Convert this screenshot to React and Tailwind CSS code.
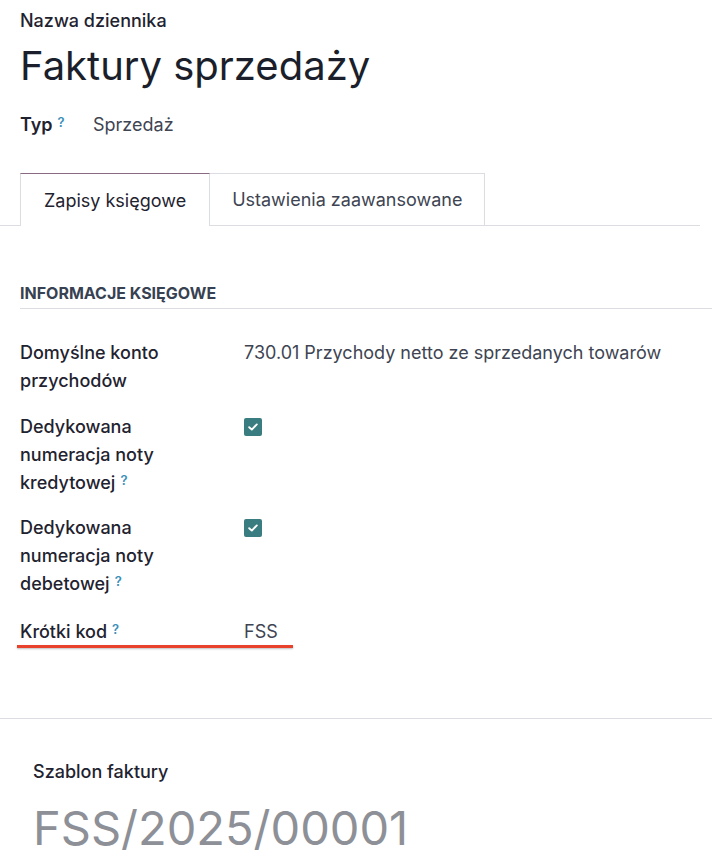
import React from 'react';

function Help() {
    return <sup className="ml-[5px] text-[13px] font-semibold text-[#3b8fb8] relative -top-[4px]">?</sup>;
}

function CheckBox() {
    return (
        <span className="mt-[5px] flex h-[18px] w-[18px] items-center justify-center rounded-[2px] bg-[#3a7d80]">
            <svg width="10" height="8" viewBox="0 0 10 8" fill="none">
                <path d="M1.2 4.2 L3.8 6.6 L8.8 1.4" stroke="white" strokeWidth="1.9" strokeLinecap="round" strokeLinejoin="round" />
            </svg>
        </span>
    );
}

function Row({ label, children, className = '' }) {
    return (
        <div className={`flex ${className}`}>
            <div className="w-[224px] shrink-0 text-[18px] leading-[28px] font-medium text-[#1f2330]">{label}</div>
            <div className="text-[18px] leading-[28px] text-[#3e4452]">{children}</div>
        </div>
    );
}

export default function App() {
    return (
        <div className="min-h-[868px] w-full bg-white font-['Inter',sans-serif]">
            <div className="px-5 pt-[9px]">
                <div className="text-[18px] leading-[24px] font-medium text-[#1f2330]">Nazwa dziennika</div>
                <h1 className="mt-[8px] text-[40px] leading-[50px] text-[#1b1f2b]">Faktury sprzedaży</h1>
                <div className="mt-[20px] flex items-center text-[18px] leading-[28px]">
                    <span className="w-[73px] font-semibold text-[#1f2330]">Typ<Help /></span>
                    <span className="text-[#3e4452]">Sprzedaż</span>
                </div>
            </div>

            <div className="mt-[34px] flex w-[700px] border-b border-[#dcdde2] pl-5">
                <div className="-mb-px flex h-[53px] items-center border-x border-t border-[#dcdde2] border-t-[#8a6a82] bg-white px-[23px] text-[18px] text-[#1f2330]">
                    Zapisy księgowe
                </div>
                <div className="flex h-[52px] items-center border-r border-t border-[#dcdde2] px-[22px] text-[18px] text-[#3e4452]">
                    Ustawienia zaawansowane
                </div>
            </div>

            <div className="pl-5 pt-[55px]">
                <div className="border-b border-[#dcdde2] pb-[3px] text-[16px] leading-[24px] font-bold uppercase text-[#374151]">
                    Informacje księgowe
                </div>
            </div>

            <div className="px-5 pt-[30px]">
                <Row label="Domyślne konto przychodów">730.01 Przychody netto ze sprzedanych towarów</Row>
                <Row className="mt-[18px]" label={<>Dedykowana<br />numeracja noty<br />kredytowej<Help /></>}>
                    <CheckBox />
                </Row>
                <Row className="mt-[17px]" label={<>Dedykowana<br />numeracja noty<br />debetowej<Help /></>}>
                    <CheckBox />
                </Row>
                <div className="relative mt-[20px]">
                    <Row label={<>Krótki kod<Help /></>}>FSS</Row>
                    <div className="absolute left-[-3px] top-[27px] h-[3px] w-[276px] bg-[#e8422d] shadow-[0_1px_2px_rgba(0,0,0,0.25)]" />
                </div>
            </div>

            <div className="mt-[72px] border-t border-[#dcdde2] px-[33px] pt-[39px]">
                <div className="text-[18px] leading-[28px] font-medium text-[#1f2330]">Szablon faktury</div>
                <div className="mt-[12px] text-[47px] leading-[60px] text-[#8e9097]">FSS/2025/00001</div>
            </div>
        </div>
    );
}
